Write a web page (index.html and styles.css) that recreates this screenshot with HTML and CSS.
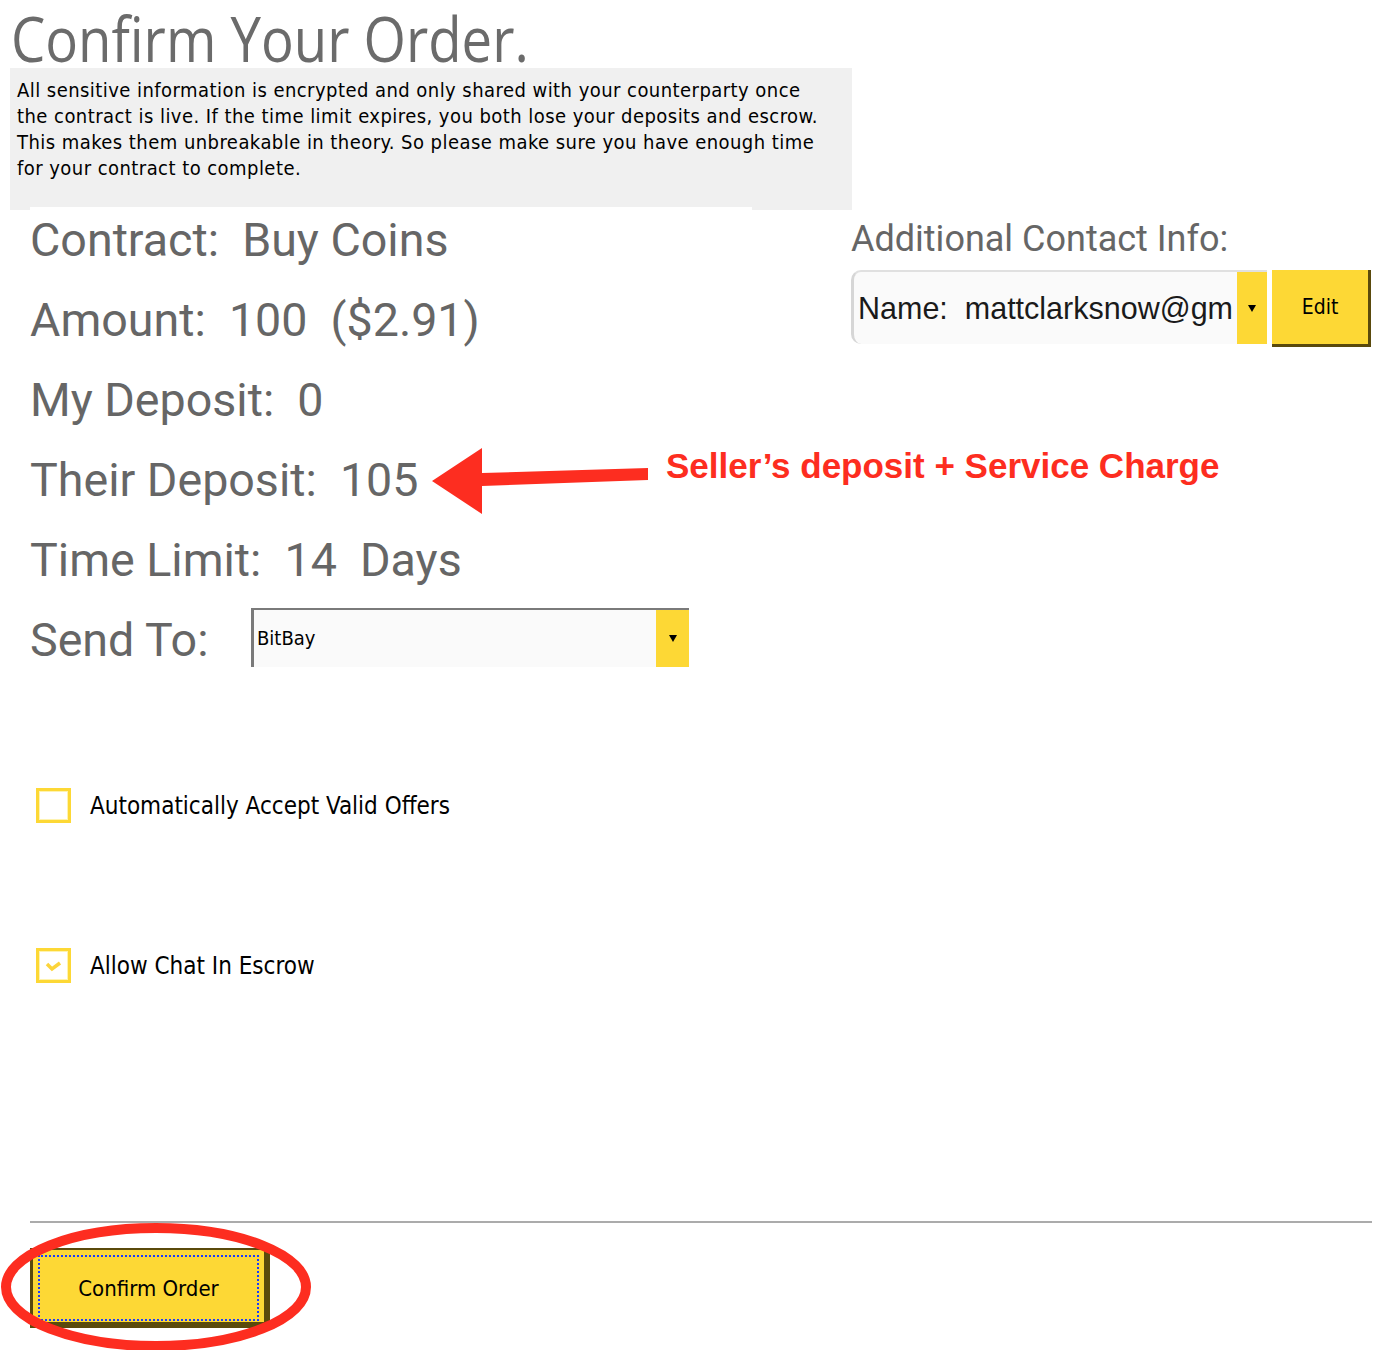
FILE: index.html
```html
<!DOCTYPE html>
<html>
<head>
<meta charset="utf-8">
<link rel="stylesheet" href="styles.css">
</head>
<body>
<div class="page">
  <h1 class="title"><span class="title-text">Confirm Your Order.</span></h1>
  <div class="notice">
    <p>All sensitive information is encrypted and only shared with your counterparty once<br>the contract is live. If the time limit expires, you both lose your deposits and escrow.<br>This makes them unbreakable in theory. So please make sure you have enough time<br>for your contract to complete.</p>
  </div>
  <div class="main">
    <div class="details">
      <div class="row">Contract:&nbsp; Buy Coins</div>
      <div class="row">Amount:&nbsp; 100&nbsp; ($2.91)</div>
      <div class="row">My Deposit:&nbsp; 0</div>
      <div class="row">Their Deposit:&nbsp; 105</div>
      <div class="row">Time Limit:&nbsp; 14&nbsp; Days</div>
      <div class="row send">
        <span class="send-label">Send To:</span>
        <div class="select">
          <span class="select-value">BitBay</span>
          <span class="select-btn"><span class="tri"></span></span>
        </div>
      </div>
    </div>
    <div class="contact">
      <div class="contact-title">Additional Contact Info:</div>
      <div class="contact-row">
        <div class="contact-select">
          <span class="contact-value">Name:&nbsp; mattclarksnow@gm</span>
          <span class="contact-btn"><span class="tri"></span></span>
        </div>
        <button class="edit-btn">Edit</button>
      </div>
    </div>
  </div>
  <div class="checks">
    <label class="check first"><span class="box"></span><span class="check-text">Automatically Accept Valid Offers</span></label>
    <label class="check second"><span class="box checked"><svg width="20" height="14" viewBox="0 0 20 14"><path d="M3 5 L8 10 L16 4" fill="none" stroke="#fcd43a" stroke-width="3.5"/></svg></span><span class="check-text">Allow Chat In Escrow</span></label>
  </div>
  <div class="footer">
    <button class="confirm-btn"><span class="focus">Confirm Order</span></button>
  </div>

  <svg class="arrow" width="230" height="60" viewBox="0 0 230 60">
    <polygon points="0,33 50,0 50,25 216,20 216,32 50,38 50,66" fill="#fd2d20"/>
  </svg>
  <div class="note">Seller’s deposit + Service Charge</div>
  <svg class="ellipse" width="320" height="140" viewBox="0 0 320 140">
    <ellipse cx="156" cy="66" rx="150" ry="59" fill="none" stroke="#fd2d20" stroke-width="10"/>
  </svg>
</div>
</body>
</html>
```
FILE: styles.css
```css
html, body {
  margin: 0;
  padding: 0;
  background: #ffffff;
}
.page {
  position: relative;
  width: 1388px;
  height: 1350px;
  overflow: hidden;
}
.title {
  margin: 0;
  padding-left: 11px;
  height: 68px;
  font-weight: normal;
}
.title-text {
  display: inline-block;
  font-family: "Open Sans", sans-serif;
  font-size: 63px;
  line-height: 66px;
  padding-top: 5px;
  color: #6b6b6b;
  transform: scaleX(0.865);
  transform-origin: 0 0;
  white-space: nowrap;
}
.notice {
  position: relative;
  margin-left: 10px;
  width: 842px;
  height: 142px;
  box-sizing: border-box;
  padding: 9px 0 0 7px;
  background: #f0f0f0;
}
.notice::after {
  content: "";
  position: absolute;
  left: 20px;
  bottom: 0;
  width: 722px;
  height: 3px;
  background: #ffffff;
}
.notice p {
  margin: 0;
  white-space: nowrap;
  font-family: "DejaVu Sans Condensed", "DejaVu Sans", sans-serif;
  font-size: 20px;
  line-height: 26px;
  color: #000;
  letter-spacing: 0.45px;
}
.main {
  display: flex;
}
.details {
  width: 851px;
  box-sizing: border-box;
  padding-left: 30px;
  display: flex;
  flex-direction: column;
  gap: 20px;
}
.row {
  height: 60px;
  line-height: 60px;
  font-family: Roboto, sans-serif;
  font-size: 46.6px;
  color: #666666;
  white-space: nowrap;
}
.send {
  display: flex;
  align-items: center;
}
.send-label {
  width: 221px;
}
.select {
  display: flex;
  width: 438px;
  height: 59px;
  margin-top: -5px;
  box-sizing: border-box;
  border-top: 2px solid #7a7a7a;
  border-left: 3px solid #7a7a7a;
  background: #fafafa;
}
.select-value {
  flex: 1;
  padding-left: 3px;
  font-family: "DejaVu Sans Condensed", "DejaVu Sans", sans-serif;
  font-size: 20px;
  line-height: 57px;
  color: #000;
}
.select-btn, .contact-btn {
  display: flex;
  align-items: center;
  justify-content: center;
  width: 33px;
  background: #fdd835;
}
.tri {
  width: 0;
  height: 0;
  border-left: 4px solid transparent;
  border-right: 4px solid transparent;
  border-top: 7px solid #000;
}
.contact {
  display: flex;
  flex-direction: column;
}
.contact-title {
  height: 58px;
  line-height: 58px;
  font-family: Roboto, sans-serif;
  font-size: 36px;
  color: #666666;
  white-space: nowrap;
}
.contact-row {
  display: flex;
  margin-top: 2px;
  gap: 5px;
}
.contact-select {
  display: flex;
  width: 416px;
  height: 74px;
  box-sizing: border-box;
  border-left: 3px solid #d6d6d6;
  border-top: 2px solid #e0e0e0;
  border-radius: 10px 0 0 10px;
  background: #fafafa;
}
.contact-value {
  flex: 1;
  min-width: 0;
  padding-left: 4px;
  font-family: "Liberation Sans", Arial, sans-serif;
  font-size: 30.5px;
  line-height: 72px;
  color: #1a1a1a;
  white-space: nowrap;
}
.contact-btn {
  width: 30px;
  flex-shrink: 0;
}
.edit-btn {
  width: 99px;
  height: 77px;
  box-sizing: border-box;
  padding: 0;
  border: none;
  border-right: 3px solid #5a4a0c;
  border-bottom: 3px solid #5a4a0c;
  background: #fdd835;
  font-family: "DejaVu Sans Condensed", "DejaVu Sans", sans-serif;
  font-size: 21px;
  color: #000;
}
.checks {
  display: flex;
  flex-direction: column;
  padding-left: 36px;
  margin-top: 118px;
  gap: 125px;
}
.check {
  display: flex;
  align-items: center;
  height: 35px;
}
.box {
  display: flex;
  align-items: center;
  justify-content: center;
  width: 35px;
  height: 35px;
  box-sizing: border-box;
  border: 3px solid #fdd835;
  box-shadow: inset 0 0 0 1px #fef3b0;
  background: #fff;
}
.check-text {
  margin-left: 19px;
  font-family: "DejaVu Sans Condensed", "DejaVu Sans", sans-serif;
  font-size: 24px;
  color: #000;
}
.footer {
  margin: 238px 16px 0 30px;
  padding-top: 25px;
  border-top: 2px solid #ababab;
}
.confirm-btn {
  display: block;
  width: 240px;
  height: 80px;
  box-sizing: border-box;
  padding: 0;
  border-top: 2px solid #5a4a0c;
  border-left: 3px solid #5a4a0c;
  border-right: 6px solid #5a4a0c;
  border-bottom: 6px solid #5a4a0c;
  background: #fdd835;
  font-family: "DejaVu Sans Condensed", "DejaVu Sans", sans-serif;
  font-size: 22px;
  color: #000;
}
.focus {
  display: flex;
  align-items: center;
  justify-content: center;
  margin: 5px;
  height: 62px;
  border: 2px dotted #1a3cff;
}
.arrow {
  position: absolute;
  left: 432px;
  top: 448px;
  overflow: visible;
}
.note {
  position: absolute;
  left: 666px;
  top: 444px;
  font-family: "Liberation Sans", Arial, sans-serif;
  font-weight: bold;
  font-size: 35px;
  line-height: 44px;
  color: #fd2d20;
  white-space: nowrap;
}
.ellipse {
  position: absolute;
  left: 0;
  top: 1221px;
}
```
